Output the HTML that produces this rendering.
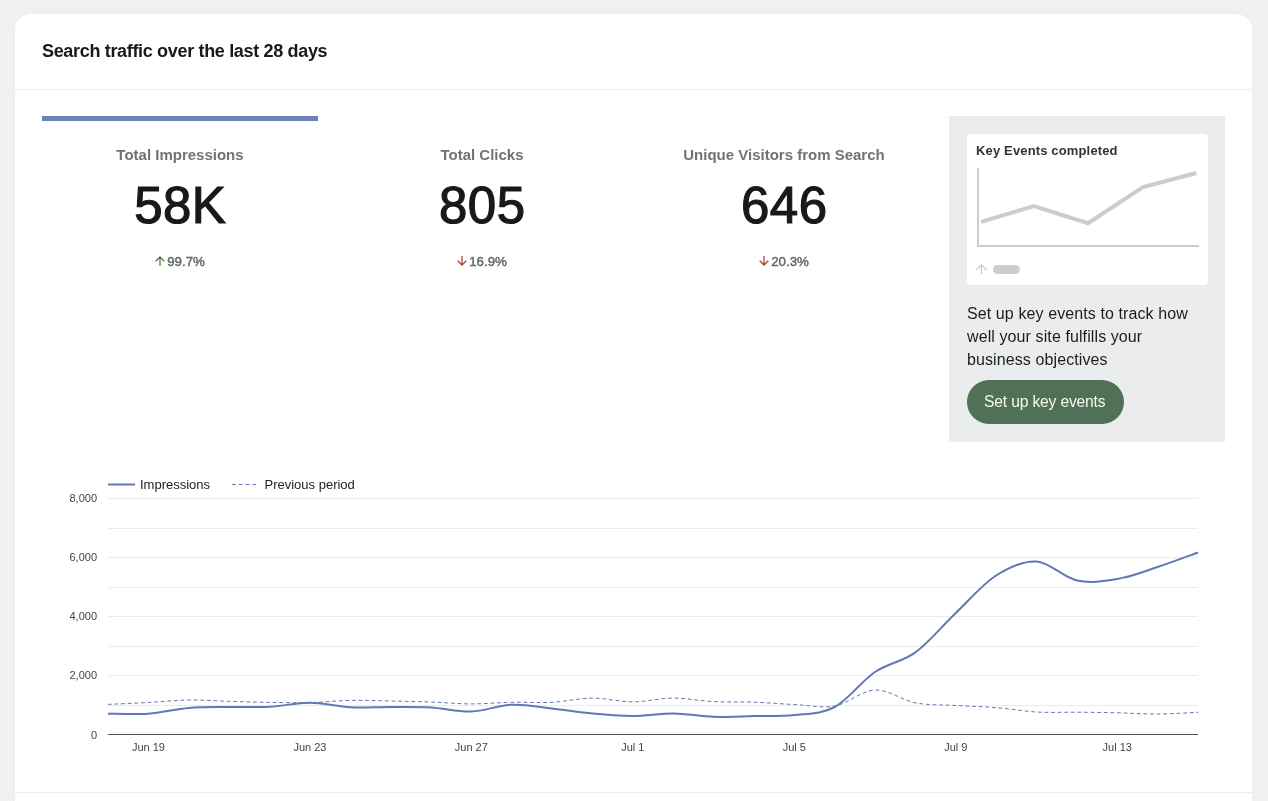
<!DOCTYPE html>
<html><head><meta charset="utf-8">
<style>
*{margin:0;padding:0;box-sizing:border-box}
body *{will-change:transform}
html,body{width:1268px;height:801px;overflow:hidden;background:#f0f0f0;font-family:"Liberation Sans",sans-serif}
.card{position:absolute;left:15px;top:14px;width:1237px;height:820px;background:#fff;border-radius:16px 16px 0 0}
.hdr-line{position:absolute;left:15px;top:89px;width:1237px;height:1px;background:#ebeef0}
.foot-line{position:absolute;left:15px;top:792px;width:1237px;height:1px;background:#ebeef0}
.title{position:absolute;left:42px;top:41px;font-size:18px;letter-spacing:-0.33px;font-weight:bold;color:#161b18;white-space:nowrap}
.tab{position:absolute;left:42px;top:116px;width:276px;height:5px;background:#6c83b8}
.metric{position:absolute;top:0;width:276px;text-align:center}
.mlabel{position:absolute;top:146px;width:276px;text-align:center;font-size:15px;font-weight:bold;color:#6f7471;white-space:nowrap}
.mval{position:absolute;top:176px;-webkit-text-stroke:1.2px #161b18;width:276px;text-align:center;font-size:51px;letter-spacing:0.5px;text-indent:0.5px;color:#161b18;white-space:nowrap}
.mchg{position:absolute;top:254px;width:276px;text-align:center;font-size:13.3px;-webkit-text-stroke:0.45px #636965;color:#636965;white-space:nowrap}
.panel{position:absolute;left:949px;top:116px;width:276px;height:326px;background:#ebeced}
.inner{position:absolute;left:967px;top:134px;width:241px;height:151px;background:#fff;border-radius:4px}
.ktitle{position:absolute;left:976px;top:143px;font-size:13px;letter-spacing:0.15px;font-weight:bold;color:#333;white-space:nowrap}
.ptext{position:absolute;left:967px;top:302px;width:238px;font-size:16px;letter-spacing:0.1px;line-height:23px;color:#1a1f1b}
.btn{position:absolute;left:967px;top:380px;width:157px;height:44px;border-radius:22px;background:#507155;color:#f4f8f4;font-size:15.6px;letter-spacing:-0.15px;text-indent:-1.5px;text-align:center;line-height:44px;white-space:nowrap}
svg.full{position:absolute;left:0;top:0}
.arr{display:inline-block;vertical-align:baseline;margin-right:2px;position:relative;top:0px}
.ax{font-family:"Liberation Sans",sans-serif;font-size:11px;fill:#444}
.lg{font-family:"Liberation Sans",sans-serif;font-size:13px;fill:#222}
</style></head><body>
<div class="card"></div>
<div class="hdr-line"></div>
<div class="foot-line"></div>
<div class="title">Search traffic over the last 28 days</div>
<div class="tab"></div>
<div class="mlabel" style="left:42px">Total Impressions</div>
<div class="mval" style="left:42px">58K</div>
<div class="mchg" style="left:42px"><svg class="arr" width="10" height="10" viewBox="0 0 10 10"><path d="M5,10 V0.8 M0.7,5.3 L5,1 L9.3,5.3" fill="none" stroke="#4f7a3b" stroke-width="1.25"/></svg>99.7%</div>
<div class="mlabel" style="left:344px">Total Clicks</div>
<div class="mval" style="left:344px">805</div>
<div class="mchg" style="left:344px"><svg class="arr" width="10" height="10" viewBox="0 0 10 10"><path d="M5,0 V9.2 M0.7,4.7 L5,9 L9.3,4.7" fill="none" stroke="#a5482a" stroke-width="1.25"/></svg>16.9%</div>
<div class="mlabel" style="left:646px">Unique Visitors from Search</div>
<div class="mval" style="left:646px">646</div>
<div class="mchg" style="left:646px"><svg class="arr" width="10" height="10" viewBox="0 0 10 10"><path d="M5,0 V9.2 M0.7,4.7 L5,9 L9.3,4.7" fill="none" stroke="#a5482a" stroke-width="1.25"/></svg>20.3%</div>
<div class="panel"></div>
<div class="inner"></div>
<div class="ktitle">Key Events completed</div>
<svg class="full" width="1268" height="801" viewBox="0 0 1268 801">
<line x1="978" y1="168" x2="978" y2="246" stroke="#ccc" stroke-width="2"/>
<line x1="977" y1="246" x2="1199" y2="246" stroke="#ccc" stroke-width="2"/>
<polyline points="981,221.8 1034,206 1088,223.2 1143,187 1196.5,173" fill="none" stroke="#ccc" stroke-width="4"/>
<path d="M981.4,274.5 L981.4,265.2 M976.3,270 L981.4,264.9 L986.5,270" stroke="#c5c9cc" stroke-width="1.1" fill="none"/>
<rect x="993" y="265" width="27" height="9" rx="4.5" fill="#cbced0"/>
</svg>
<div class="ptext">Set up key events to track how well your site fulfills your business objectives</div>
<div class="btn">Set up key events</div>
<svg class="full" width="1268" height="801" viewBox="0 0 1268 801">
<g stroke="#ebebeb" stroke-width="1">
<line x1="108" y1="498.5" x2="1198" y2="498.5"/>
<line x1="108" y1="528.5" x2="1198" y2="528.5"/>
<line x1="108" y1="557.5" x2="1198" y2="557.5"/>
<line x1="108" y1="587.5" x2="1198" y2="587.5"/>
<line x1="108" y1="616.5" x2="1198" y2="616.5"/>
<line x1="108" y1="646.5" x2="1198" y2="646.5"/>
<line x1="108" y1="675.5" x2="1198" y2="675.5"/>
<line x1="108" y1="705.5" x2="1198" y2="705.5"/>
</g>
<line x1="108" y1="734.5" x2="1198" y2="734.5" stroke="#555" stroke-width="1"/>
<g class="ax" text-anchor="end">
<text x="97" y="502">8,000</text>
<text x="97" y="561">6,000</text>
<text x="97" y="620">4,000</text>
<text x="97" y="679">2,000</text>
<text x="97" y="739">0</text>
</g>
<g class="ax" text-anchor="middle">
<text x="148.4" y="751">Jun 19</text>
<text x="309.9" y="751">Jun 23</text>
<text x="471.3" y="751">Jun 27</text>
<text x="632.8" y="751">Jul 1</text>
<text x="794.3" y="751">Jul 5</text>
<text x="955.8" y="751">Jul 9</text>
<text x="1117.3" y="751">Jul 13</text>
</g>
<line x1="108" y1="484.5" x2="135" y2="484.5" stroke="#6279b3" stroke-width="2"/>
<text class="lg" x="140" y="489">Impressions</text>
<line x1="232" y1="484.5" x2="257" y2="484.5" stroke="#6279b3" stroke-width="1" stroke-dasharray="3.8,3"/>
<text class="lg" x="264.5" y="489">Previous period</text>
<path d="M108.0,704.4 C114.7,704.1 134.9,703.2 148.4,702.5 C161.8,701.8 175.3,700.2 188.7,700.0 C202.2,699.8 215.7,700.9 229.1,701.3 C242.6,701.7 256.0,702.2 269.5,702.4 C282.9,702.6 296.4,702.9 309.9,702.6 C323.3,702.3 336.8,700.7 350.2,700.4 C363.7,700.1 377.1,700.7 390.6,701.0 C404.0,701.3 417.5,701.5 431.0,702.0 C444.4,702.5 457.9,703.9 471.3,703.9 C484.8,703.9 498.2,702.6 511.7,702.3 C525.2,702.0 538.6,703.0 552.1,702.3 C565.5,701.6 579.0,698.2 592.4,698.1 C605.9,698.0 619.4,701.9 632.8,701.9 C646.3,701.9 659.7,698.1 673.2,698.1 C686.6,698.1 700.1,700.9 713.6,701.6 C727.0,702.3 740.5,701.7 753.9,702.2 C767.4,702.7 780.8,703.9 794.3,704.5 C807.8,705.1 821.2,708.4 834.7,706.0 C848.1,703.6 861.6,690.5 875.0,690.0 C888.5,689.5 902.0,700.2 915.4,702.8 C928.9,705.4 942.3,704.7 955.8,705.5 C969.2,706.3 982.7,706.5 996.1,707.6 C1009.6,708.7 1023.1,711.2 1036.5,712.0 C1050.0,712.8 1063.4,712.1 1076.9,712.2 C1090.3,712.3 1103.8,712.5 1117.3,712.8 C1130.7,713.1 1144.2,714.1 1157.6,714.0 C1171.1,713.9 1191.3,712.6 1198.0,712.3" fill="none" stroke="#6178b4" stroke-width="1" stroke-dasharray="3.8,2.8"/>
<path d="M108.0,713.7 C114.7,713.7 134.9,714.7 148.4,713.7 C161.8,712.8 175.3,709.1 188.7,708.0 C202.2,706.9 215.7,707.2 229.1,707.0 C242.6,706.8 256.0,707.5 269.5,706.8 C282.9,706.1 296.4,702.7 309.9,702.8 C323.3,702.9 336.8,706.6 350.2,707.3 C363.7,708.0 377.1,707.0 390.6,707.1 C404.0,707.2 417.5,706.9 431.0,707.6 C444.4,708.3 457.9,712.0 471.3,711.5 C484.8,711.0 498.2,705.2 511.7,704.7 C525.2,704.2 538.6,707.0 552.1,708.5 C565.5,710.0 579.0,712.2 592.4,713.5 C605.9,714.8 619.4,716.0 632.8,716.0 C646.3,716.0 659.7,713.3 673.2,713.4 C686.6,713.5 700.1,716.4 713.6,716.8 C727.0,717.2 740.5,716.3 753.9,716.0 C767.4,715.7 780.8,716.5 794.3,715.0 C807.8,713.5 821.2,714.2 834.7,707.0 C848.1,699.8 861.6,681.1 875.0,672.0 C888.5,662.9 902.0,662.2 915.4,652.4 C928.9,642.6 942.3,625.8 955.8,613.0 C969.2,600.2 982.7,584.1 996.1,575.5 C1009.6,566.9 1023.1,560.7 1036.5,561.5 C1050.0,562.3 1063.4,577.6 1076.9,580.5 C1090.3,583.4 1103.8,581.2 1117.3,579.0 C1130.7,576.8 1144.2,571.4 1157.6,567.0 C1171.1,562.6 1191.3,554.9 1198.0,552.5" fill="none" stroke="#6178b4" stroke-width="2"/>
</svg>
</body></html>
